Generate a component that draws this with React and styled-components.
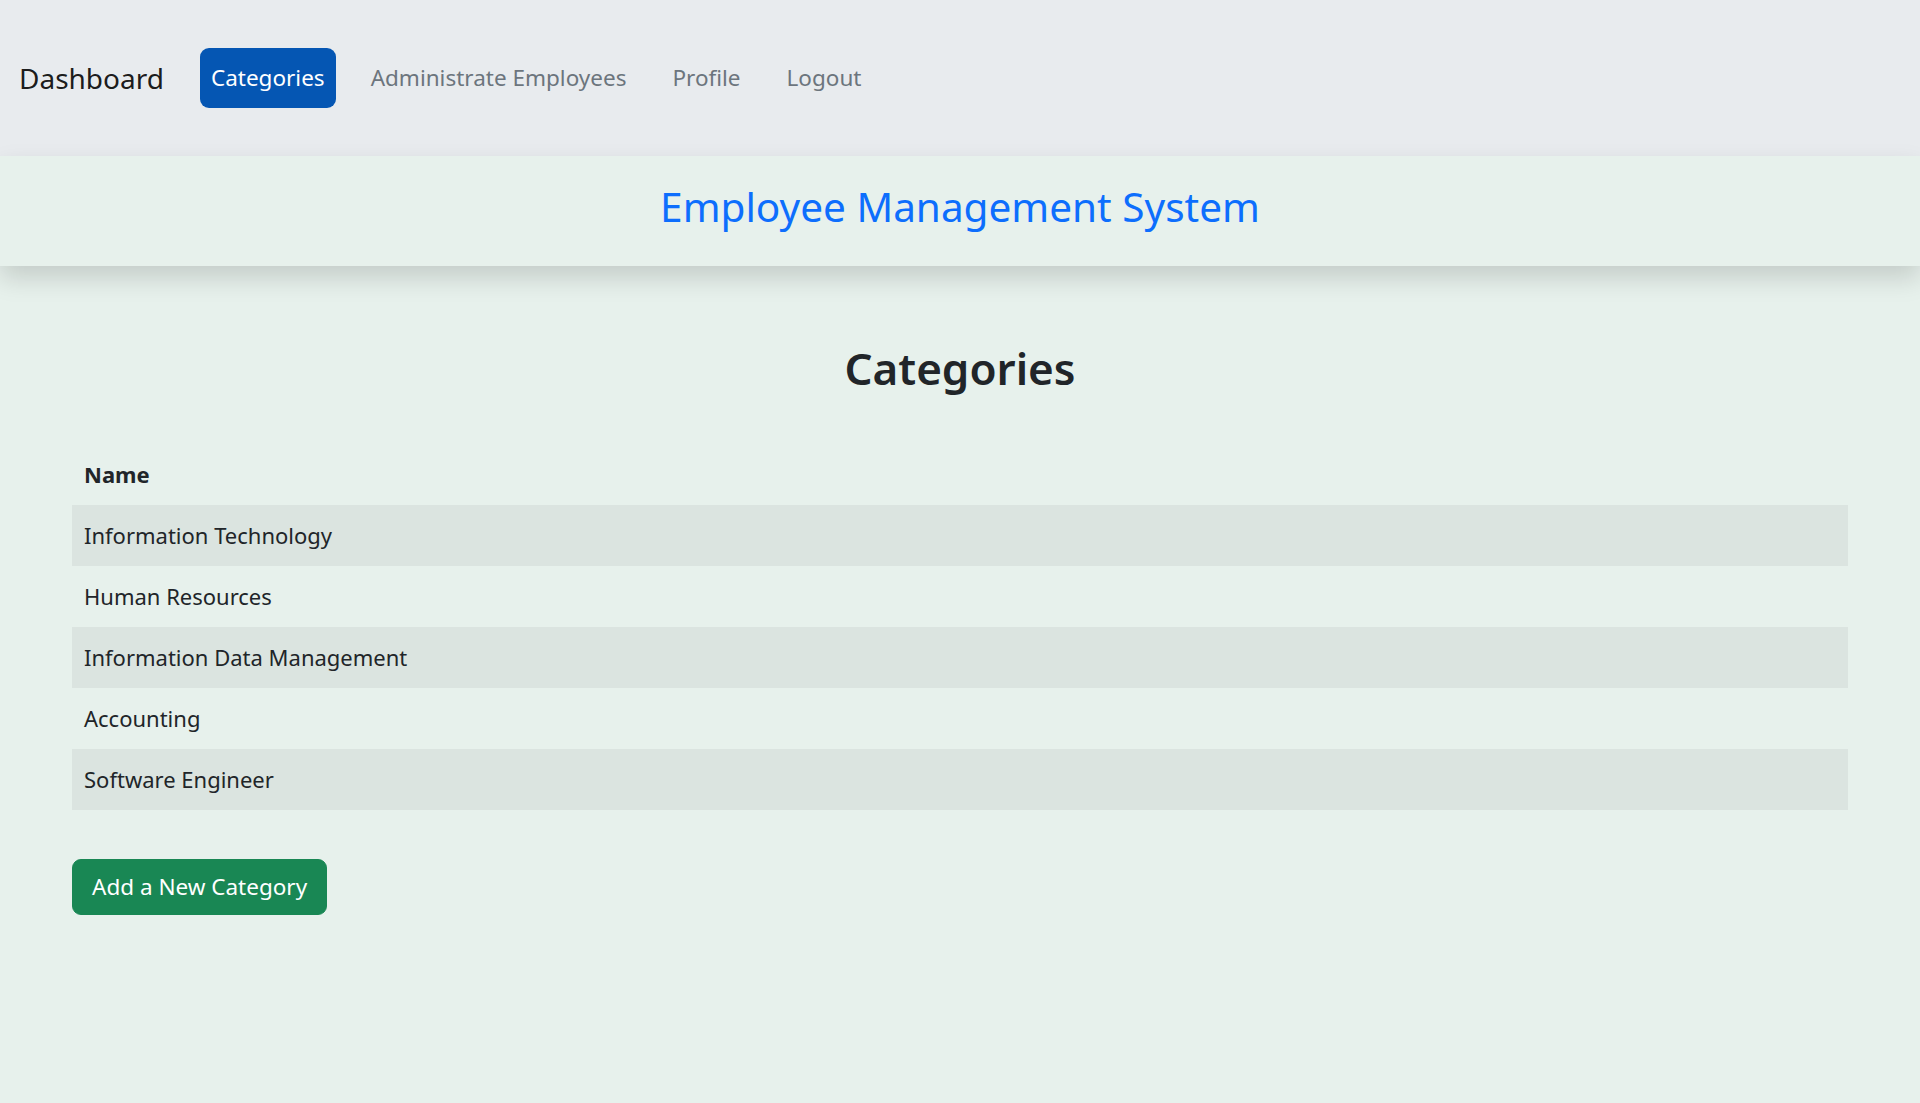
import React from 'react';
import styled, { createGlobalStyle } from 'styled-components';

const GlobalStyle = createGlobalStyle`
  * { box-sizing: border-box; }
  body {
    margin: 0;
    background: #e7f1ec;
    color: #212529;
    font-family: "Noto Sans", "Open Sans", sans-serif;
    font-size: 22px;
    line-height: 1.5;
  }
`;

/**
 * Navbar
 */
const Nav = styled.nav`
  display: flex;
  align-items: center;
  height: 156px;
  padding: 0 19px;
  background: #e8ebee;
`;

const Brand = styled.a`
  color: rgba(0, 0, 0, 0.9);
  font-size: 28px;
  margin-right: 36px;
  text-decoration: none;
`;

const Menu = styled.ul`
  display: flex;
  align-items: center;
  gap: 24px;
  margin: 0;
  padding: 0;
  list-style: none;
`;

const MenuLink = styled.a`
  display: block;
  padding: 12px 11px;
  border-radius: 9px;
  font-size: 22.5px;
  line-height: 36px;
  text-decoration: none;
  color: ${props => (props.$active ? '#fff' : '#6c757d')};
  background: ${props => (props.$active ? '#0556b3' : 'transparent')};
`;

/**
 * Title band
 */
const Banner = styled.header`
  display: flex;
  justify-content: center;
  align-items: center;
  height: 110px;
  padding-bottom: 7px;
  background: #e7f1ec;
  box-shadow: 0 12px 24px rgba(0, 0, 0, 0.15);
  position: relative;
`;

const Title = styled.h1`
  margin: 0;
  font-size: 40.5px;
  font-weight: 400;
  color: #0d6efd;
  line-height: 1.2;
`;

/**
 * Content
 */
const Main = styled.main`
  padding: 76px 72px 0;
`;

const Heading = styled.h2`
  margin: 0 0 49px;
  text-align: center;
  font-size: 44px;
  font-weight: 600;
  line-height: 1.2;
  color: #212529;
`;

const Table = styled.table`
  width: 100%;
  border-collapse: collapse;
  margin-bottom: 49px;
`;

const HeadCell = styled.th`
  text-align: left;
  height: 61px;
  padding: 12px;
  font-weight: 700;
  font-size: 22px;
`;

const Row = styled.tr`
  background: ${props => (props.$striped ? 'rgba(0, 0, 0, 0.05)' : 'transparent')};
`;

const Cell = styled.td`
  height: 61px;
  padding: 12px;
  font-size: 22px;
`;

const AddButton = styled.button`
  font-family: inherit;
  font-size: 22.5px;
  line-height: 36px;
  padding: 9px 19px;
  color: #fff;
  background: #198754;
  border: 1px solid #198754;
  border-radius: 9px;
  cursor: pointer;
`;

const categories = [
  'Information Technology',
  'Human Resources',
  'Information Data Management',
  'Accounting',
  'Software Engineer',
];

const App = () => (
  <>
    <GlobalStyle />
    <Nav>
      <Brand href="#">Dashboard</Brand>
      <Menu>
        <li><MenuLink href="#" $active>Categories</MenuLink></li>
        <li><MenuLink href="#">Administrate Employees</MenuLink></li>
        <li><MenuLink href="#">Profile</MenuLink></li>
        <li><MenuLink href="#">Logout</MenuLink></li>
      </Menu>
    </Nav>
    <Banner>
      <Title>Employee Management System</Title>
    </Banner>
    <Main>
      <Heading>Categories</Heading>
      <Table>
        <thead>
          <tr><HeadCell>Name</HeadCell></tr>
        </thead>
        <tbody>
          {categories.map((name, i) => (
            <Row key={name} $striped={i % 2 === 0}>
              <Cell>{name}</Cell>
            </Row>
          ))}
        </tbody>
      </Table>
      <AddButton>Add a New Category</AddButton>
    </Main>
  </>
);

export default App;
